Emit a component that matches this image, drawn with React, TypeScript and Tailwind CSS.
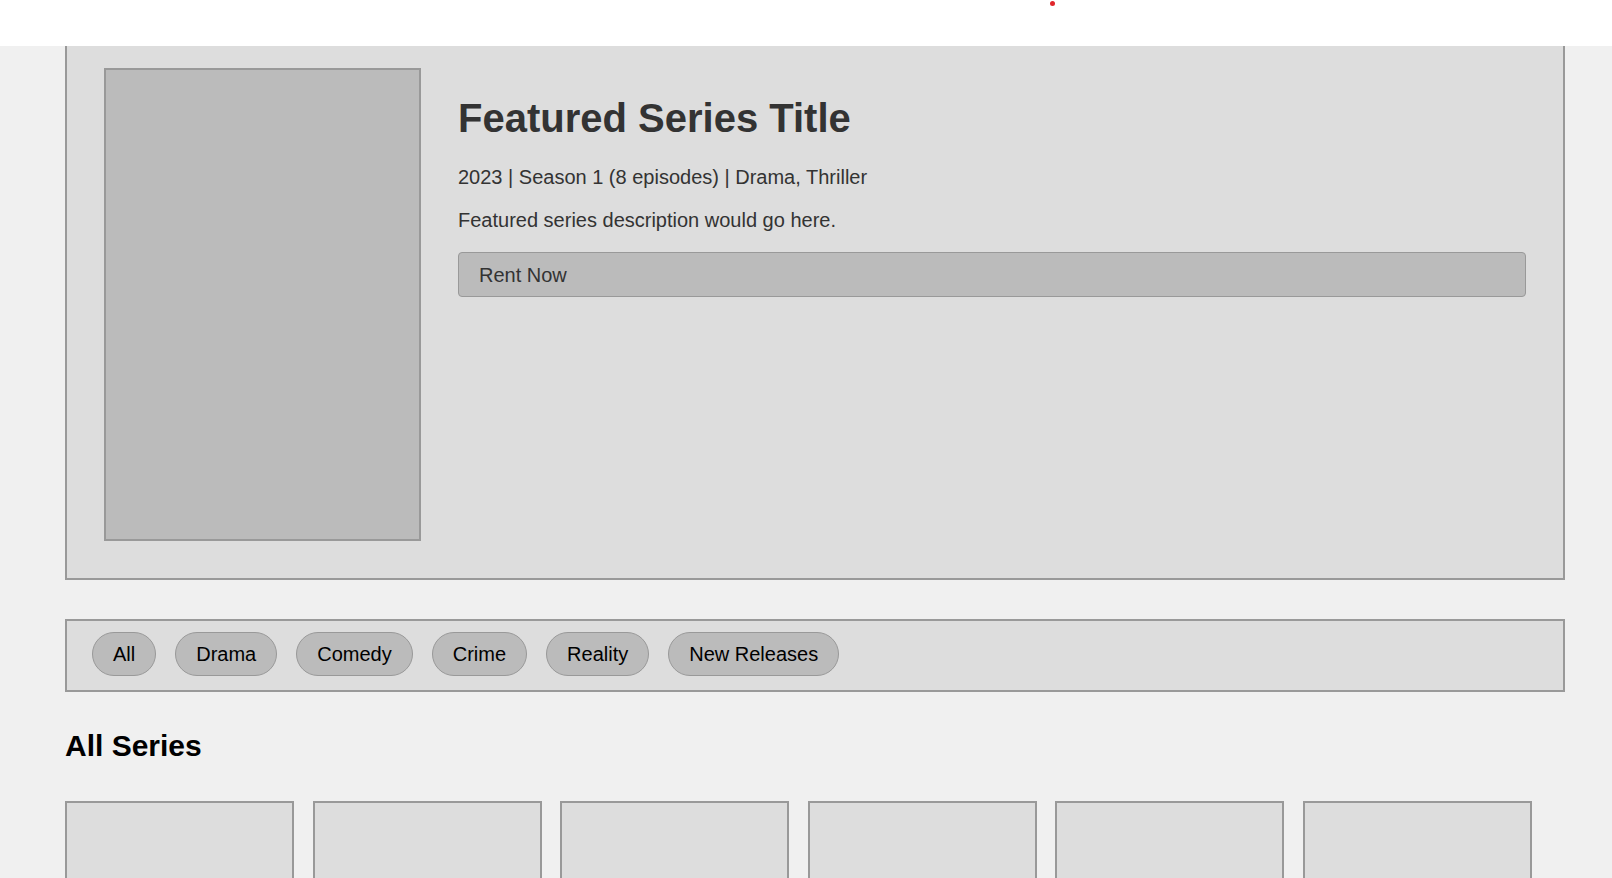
const genres = ["All", "Drama", "Comedy", "Crime", "Reality", "New Releases"];

const series = [1, 2, 3, 4, 5, 6];

function Header() {
  return (
    <header className="relative h-[46px] w-full bg-white">
      {/* notification dot, mostly clipped at the top */}
      <span className="absolute left-[1050px] top-[1px] h-[5px] w-[5px] rounded-full bg-[#e0262b]" />
    </header>
  );
}

function Featured() {
  return (
    <section className="ml-[65px] flex w-[1500px] gap-[37px] border-2 border-t-0 border-[#999] bg-[#ddd] px-[37px] pb-[37px] pt-[22px]">
      <div className="h-[473px] w-[317px] shrink-0 border-2 border-[#999] bg-[#bbb]" />
      <div className="flex-1 text-[#333]">
        <h1 className="mt-[27px] text-[40px] font-bold leading-[46px]">Featured Series Title</h1>
        <p className="mt-[25px] text-[20px] leading-[23px]">2023 | Season 1 (8 episodes) | Drama, Thriller</p>
        <p className="mt-[20px] text-[20px] leading-[23px]">Featured series description would go here.</p>
        <button className="mt-[20px] w-full rounded-[4px] border border-[#999] bg-[#bbb] px-[20px] py-[10.5px] text-left text-[20px] leading-[22px] text-[#333]">
          Rent Now
        </button>
      </div>
    </section>
  );
}

function GenreBar() {
  return (
    <div className="ml-[65px] mt-[39px] flex w-[1500px] gap-[19px] border-2 border-[#999] bg-[#ddd] pb-[14px] pl-[25px] pt-[11px]">
      {genres.map((g) => (
        <button
          key={g}
          className="rounded-full border border-[#999] bg-[#bbb] px-[20px] py-[10px] text-[20px] leading-[22px] text-black"
        >
          {g}
        </button>
      ))}
    </div>
  );
}

export default function App() {
  return (
    <div className="min-h-screen bg-[#f0f0f0] font-['Liberation_Sans',Arial,sans-serif]">
      <Header />
      <Featured />
      <GenreBar />
      <h2 className="ml-[65px] mt-[37px] text-[30px] font-bold leading-[34px] text-black">All Series</h2>
      <div className="ml-[65px] mt-[38px] flex gap-[18.5px] pb-10">
        {series.map((s) => (
          <div key={s} className="h-[343px] w-[229px] border-2 border-[#999] bg-[#ddd]" />
        ))}
      </div>
    </div>
  );
}
